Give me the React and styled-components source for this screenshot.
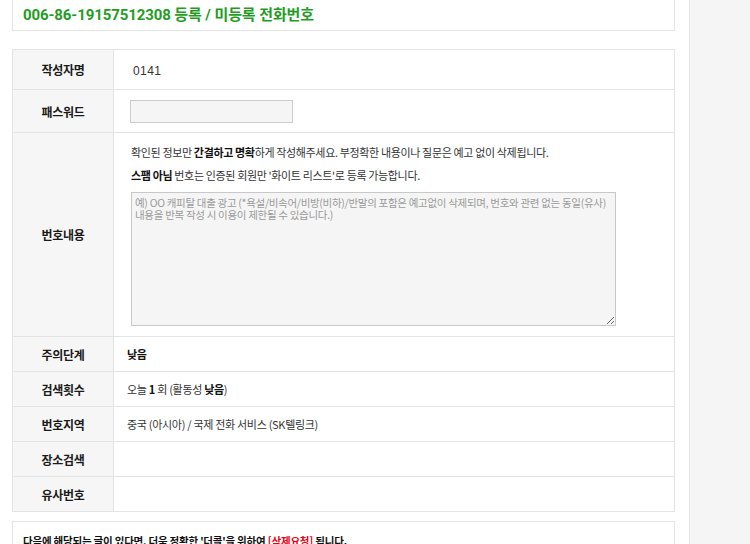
import React from "react";
import styled, { createGlobalStyle } from "styled-components";

const GlobalStyle = createGlobalStyle`
  html, body {
    margin: 0;
    padding: 0;
    background: #ffffff;
  }
  body {
    font-family: "Liberation Sans", "Noto Sans CJK KR", sans-serif;
    color: #222222;
  }
`;

const Page = styled.div`
  display: flex;
  height: 544px;
  overflow: hidden;
`;

const Main = styled.main`
  flex: 1;
  padding: 0 14px 0 12px;
`;

const Sidebar = styled.aside`
  width: 60px;
  background: #f5f5f5;
  border-left: 1px solid #e6e6e6;
`;

const Card = styled.section`
  background: #ffffff;
  border: 1px solid #e4e4e4;
  border-top: ${(p) => (p.$cut ? "none" : "1px solid #e4e4e4")};
  padding: ${(p) => p.$pad || "0 10px"};
  margin-bottom: 18px;
`;

const Title = styled.h2`
  margin: 0;
  font-family: "Roboto", "Noto Sans CJK KR", sans-serif;
  font-size: 15px;
  font-weight: 700;
  line-height: 30px;
  color: #1f9d1f;
  letter-spacing: -0.1px;
`;

const Table = styled.table`
  width: 100%;
  border-collapse: collapse;
  border: 1px solid #e4e4e4;
  margin-bottom: 9px;
`;

const Row = styled.tr`
  height: ${(p) => p.$h}px;
  border-bottom: 1px solid #e4e4e4;
`;

const Label = styled.th`
  width: 100px;
  padding: 0;
  background: #f6f6f6;
  border-right: 1px solid #e4e4e4;
  font-family: "Noto Sans CJK KR", sans-serif;
  font-size: 12px;
  font-weight: 700;
  color: #1a1a1a;
  letter-spacing: -0.3px;
  text-align: center;
  vertical-align: middle;
`;

const Value = styled.td`
  padding: ${(p) => p.$pad || "0 13px"};
  font-family: "Noto Sans CJK KR", sans-serif;
  font-size: 11px;
  letter-spacing: -0.3px;
  color: #333333;
  vertical-align: middle;

  b {
    font-weight: 700;
    color: #111111;
  }
`;

const Name = styled.span`
  font-family: "Liberation Sans", sans-serif;
  font-size: 12px;
  letter-spacing: 0.4px;
  padding-left: 6px;
`;

const PasswordInput = styled.input`
  display: block;
  box-sizing: border-box;
  width: 163px;
  height: 23px;
  margin: 0 0 0 3px;
  background: #f5f5f5;
  border: 1px solid #cccccc;
`;

const Note = styled.p`
  margin: 0;
  font-size: 11px;
  line-height: 23px;
  letter-spacing: -0.35px;
  color: #333333;
`;

const Memo = styled.textarea`
  display: block;
  box-sizing: border-box;
  width: 485px;
  height: 134px;
  margin: 5px 0 0;
  padding: 4px 3px;
  background: #f5f5f5;
  border: 1px solid #c8c8c8;
  font-family: "Noto Sans CJK KR", sans-serif;
  font-size: 10.5px;
  line-height: 12px;
  letter-spacing: -0.3px;
  resize: both;

  &::placeholder {
    color: #9a9a9a;
  }
`;

const Notice = styled.p`
  margin: 0;
  font-family: "Noto Sans CJK KR", sans-serif;
  font-size: 10.5px;
  font-weight: 700;
  letter-spacing: -0.2px;
  line-height: 14px;
  color: #111111;
`;

const Red = styled.span`
  color: #e60012;
`;

const placeholder =
  "예) OO 캐피탈 대출 광고 (*욕설/비속어/비방(비하)/반말의 포함은 예고없이 삭제되며, 번호와 관련 없는 동일(유사)\n내용을 반복 작성 시 이용이 제한될 수 있습니다.)";

export default function App() {
  return (
    <>
      <GlobalStyle />
      <Page>
        <Main>
          <Card $cut>
            <Title>006-86-19157512308 등록 / 미등록 전화번호</Title>
          </Card>

          <Table>
            <tbody>
              <Row $h={40}>
                <Label>작성자명</Label>
                <Value>
                  <Name>0141</Name>
                </Value>
              </Row>
              <Row $h={43}>
                <Label>패스워드</Label>
                <Value>
                  <PasswordInput type="password" />
                </Value>
              </Row>
              <Row $h={204}>
                <Label>번호내용</Label>
                <Value $pad="8px 16px 10px 17px">
                  <Note>
                    확인된 정보만 <b>간결하고 명확</b>하게 작성해주세요. 부정확한
                    내용이나 질문은 예고 없이 삭제됩니다.
                  </Note>
                  <Note>
                    <b>스팸 아님</b> 번호는 인증된 회원만 '화이트 리스트'로 등록
                    가능합니다.
                  </Note>
                  <Memo placeholder={placeholder} />
                </Value>
              </Row>
              <Row $h={35}>
                <Label>주의단계</Label>
                <Value>
                  <b>낮음</b>
                </Value>
              </Row>
              <Row $h={35}>
                <Label>검색횟수</Label>
                <Value>
                  오늘 <b>1</b> 회 (활동성 <b>낮음</b>)
                </Value>
              </Row>
              <Row $h={35}>
                <Label>번호지역</Label>
                <Value>중국 (아시아) / 국제 전화 서비스 (SK텔링크)</Value>
              </Row>
              <Row $h={35}>
                <Label>장소검색</Label>
                <Value />
              </Row>
              <Row $h={35}>
                <Label>유사번호</Label>
                <Value />
              </Row>
            </tbody>
          </Table>

          <Card $pad="12px 10px">
            <Notice>
              다음에 해당되는 글이 있다면, 더욱 정확한 '더콜'을 위하여{" "}
              <Red>[삭제요청]</Red> 됩니다.
            </Notice>
          </Card>
        </Main>
        <Sidebar />
      </Page>
    </>
  );
}
